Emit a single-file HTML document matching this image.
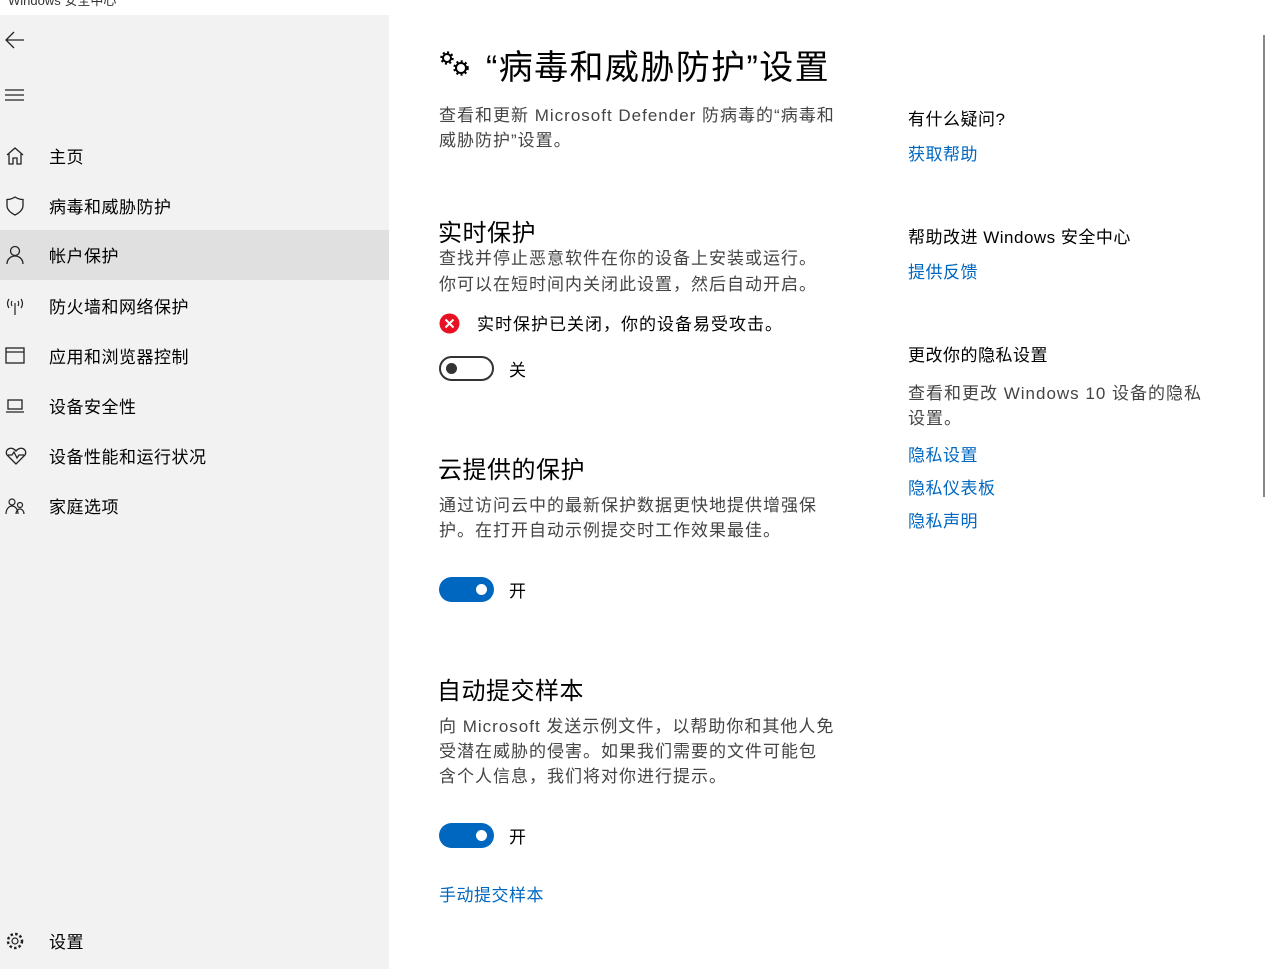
<!DOCTYPE html>
<html><head><meta charset="utf-8"><style>
*{margin:0;padding:0;box-sizing:border-box}
body{width:1265px;height:969px;overflow:hidden;background:#fff;font-family:"Liberation Sans","Noto Sans CJK SC",sans-serif;position:relative;color:#000}
.side{position:absolute;left:0;top:15px;width:389px;height:954px;background:#f2f2f2}
.abs{position:absolute;white-space:nowrap}
.nav{position:absolute;left:0;width:389px;height:50px;font-size:17px;line-height:50px;letter-spacing:0.5px}
.nav span{position:absolute;left:49px;top:2px}
.nav svg{position:absolute;left:5px;top:15px}
.sel{background:#e0e0e0}
.t{font-size:17px;color:#444;letter-spacing:1px}
.link{color:#0067c0;font-size:17px;letter-spacing:0.5px}
.h2{font-size:24px;letter-spacing:0.5px}
.r{font-size:17px;letter-spacing:0.5px}
.tg{position:absolute;width:55px;height:25px;border-radius:13px}
</style></head><body>
<div class="abs" style="left:8px;top:-10px;font-size:13px;color:#333">Windows 安全中心</div>
<div class="side"></div>
<svg class="abs" style="left:4px;top:30px" width="22" height="20"><path d="M20 10H2M10 2L2 10l8 8" stroke="#222" stroke-width="1.3" fill="none"/></svg>
<svg class="abs" style="left:4px;top:88px" width="22" height="14"><path d="M1 2h19M1 7h19M1 12h19" stroke="#222" stroke-width="1.2"/></svg>
<div class="nav" style="top:131px"><svg width="20" height="20"><path d="M2 9L10 2l8 7M4 8v10h4v-6h4v6h4V8" stroke="#222" fill="none" stroke-width="1.3"/></svg><span>主页</span></div>
<div class="nav" style="top:181px"><svg width="20" height="20"><path d="M10 1C7 3 4 3.5 2 3.5v6C2 14 6 17 10 19c4-2 8-5 8-9.5v-6C16 3.5 13 3 10 1z" stroke="#222" fill="none" stroke-width="1.3"/></svg><span>病毒和威胁防护</span></div>
<div class="nav sel" style="top:230px"><svg width="20" height="20"><circle cx="10" cy="6" r="4.5" stroke="#222" fill="none" stroke-width="1.3"/><path d="M2 19c0-5 4-8 8-8s8 3 8 8" stroke="#222" fill="none" stroke-width="1.3"/></svg><span>帐户保护</span></div>
<div class="nav" style="top:281px"><svg width="20" height="20"><path d="M10 7v12M4 3c-2 3-2 6 0 9M16 3c2 3 2 6 0 9M7 5c-1 2-1 3 0 5M13 5c1 2 1 3 0 5" stroke="#222" fill="none" stroke-width="1.2"/></svg><span>防火墙和网络保护</span></div>
<div class="nav" style="top:331px"><svg width="20" height="20"><rect x="1" y="2" width="18" height="15" stroke="#222" fill="none" stroke-width="1.3"/><path d="M1 6h18" stroke="#222" stroke-width="1.3"/></svg><span>应用和浏览器控制</span></div>
<div class="nav" style="top:381px"><svg width="20" height="20"><rect x="3" y="4" width="14" height="9" stroke="#222" fill="none" stroke-width="1.3"/><path d="M1 16h18" stroke="#222" stroke-width="1.3"/></svg><span>设备安全性</span></div>
<div class="nav" style="top:431px"><svg width="22" height="20"><path d="M11 18L2 9C-1 4 6-1 11 5c5-6 12-1 9 4z M3 9h4l2-3 3 6 2-3h5" stroke="#222" fill="none" stroke-width="1.3"/></svg><span>设备性能和运行状况</span></div>
<div class="nav" style="top:481px"><svg width="22" height="20"><circle cx="7" cy="6" r="3" stroke="#222" fill="none" stroke-width="1.2"/><circle cx="15" cy="9" r="2.5" stroke="#222" fill="none" stroke-width="1.2"/><path d="M1 18c0-5 3-8 6-8s6 3 6 8M11 18c0-3 2-5 4-5s4 2 4 5" stroke="#222" fill="none" stroke-width="1.2"/></svg><span>家庭选项</span></div>
<div class="nav" style="top:916px"><svg width="20" height="20"><circle cx="10" cy="10" r="3" stroke="#222" fill="none" stroke-width="1.2"/><circle cx="10" cy="10" r="7" stroke="#222" fill="none" stroke-width="2.5" stroke-dasharray="2.5 2.2"/></svg><span>设置</span></div>

<svg class="abs" style="left:440px;top:50px" width="32" height="28"><circle cx="7" cy="8" r="4" stroke="#000" fill="none" stroke-width="2"/><circle cx="7" cy="8" r="5.5" stroke="#000" fill="none" stroke-width="2.5" stroke-dasharray="2 2.3"/><circle cx="21" cy="18" r="5" stroke="#000" fill="none" stroke-width="2"/><circle cx="21" cy="18" r="6.5" stroke="#000" fill="none" stroke-width="2.5" stroke-dasharray="2 2.3"/></svg>
<div class="abs" style="left:486px;top:40px;font-size:34px;letter-spacing:1.4px">“病毒和威胁防护”设置</div>
<div class="abs t" style="left:439px;top:103px;line-height:25px">查看和更新 Microsoft Defender 防病毒的“病毒和<br>威胁防护”设置。</div>
<div class="abs h2" style="left:438px;top:213px">实时保护</div>
<div class="abs t" style="left:439px;top:246px;line-height:26px">查找并停止恶意软件在你的设备上安装或运行。<br>你可以在短时间内关闭此设置，然后自动开启。</div>
<svg class="abs" style="left:439px;top:313px" width="21" height="21"><circle cx="10.5" cy="10.5" r="10" fill="#e81123"/><path d="M6.5 6.5l8 8M14.5 6.5l-8 8" stroke="#fff" stroke-width="2"/></svg>
<div class="abs" style="left:477px;top:310px;font-size:17px;letter-spacing:1px">实时保护已关闭，你的设备易受攻击。</div>
<div class="tg" style="left:439px;top:356px;border:2px solid #333"></div>
<div class="abs" style="left:446px;top:363px;width:11px;height:11px;border-radius:50%;background:#333"></div>
<div class="abs" style="left:509px;top:356px;font-size:17px">关</div>
<div class="abs h2" style="left:438px;top:450px">云提供的保护</div>
<div class="abs t" style="left:439px;top:493px;line-height:25px">通过访问云中的最新保护数据更快地提供增强保<br>护。在打开自动示例提交时工作效果最佳。</div>
<div class="tg" style="left:439px;top:577px;background:#0067c0"></div>
<div class="abs" style="left:476px;top:584px;width:11px;height:11px;border-radius:50%;background:#fff"></div>
<div class="abs" style="left:509px;top:577px;font-size:17px">开</div>
<div class="abs h2" style="left:437px;top:671px">自动提交样本</div>
<div class="abs t" style="left:439px;top:714px;line-height:25px">向 Microsoft 发送示例文件，以帮助你和其他人免<br>受潜在威胁的侵害。如果我们需要的文件可能包<br>含个人信息，我们将对你进行提示。</div>
<div class="tg" style="left:439px;top:823px;background:#0067c0"></div>
<div class="abs" style="left:476px;top:830px;width:11px;height:11px;border-radius:50%;background:#fff"></div>
<div class="abs" style="left:509px;top:823px;font-size:17px">开</div>
<div class="abs link" style="left:439px;top:881px">手动提交样本</div>

<div class="abs r" style="left:908px;top:105px">有什么疑问?</div>
<div class="abs link" style="left:908px;top:140px">获取帮助</div>
<div class="abs r" style="left:908px;top:223px">帮助改进 Windows 安全中心</div>
<div class="abs link" style="left:908px;top:258px">提供反馈</div>
<div class="abs r" style="left:908px;top:341px">更改你的隐私设置</div>
<div class="abs t" style="left:908px;top:381px;line-height:25px">查看和更改 Windows 10 设备的隐私<br>设置。</div>
<div class="abs link" style="left:908px;top:441px">隐私设置</div>
<div class="abs link" style="left:908px;top:474px">隐私仪表板</div>
<div class="abs link" style="left:908px;top:507px">隐私声明</div>
<div class="abs" style="left:1263px;top:35px;width:2px;height:462px;background:#888"></div>
<div class="abs" style="left:1177px;top:-2px;width:12px;height:2px;background:#222"></div>
</body></html>
